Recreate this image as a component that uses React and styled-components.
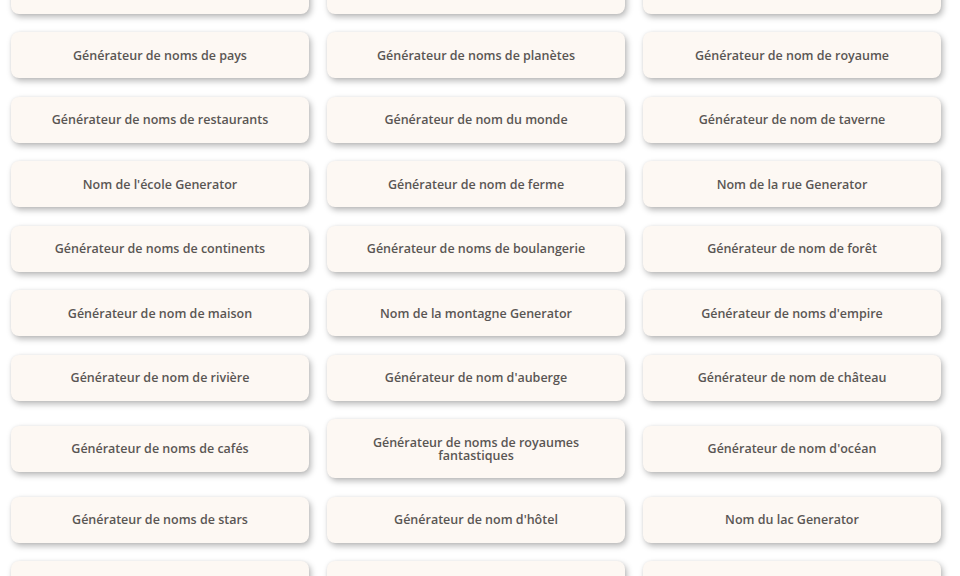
import styled, { createGlobalStyle } from "styled-components";

const GlobalStyle = createGlobalStyle`
  html, body {
    margin: 0;
    padding: 0;
    background: #ffffff;
    overflow: hidden;
  }
  body {
    font-family: "Open Sans", "Noto Sans", sans-serif;
  }
`;

const Page = styled.div`
  width: 960px;
  height: 576px;
  overflow: hidden;
`;

const Grid = styled.div`
  display: grid;
  grid-template-columns: repeat(3, 298px);
  column-gap: 18px;
  row-gap: 18.5px;
  align-items: center;
  margin-top: -32.5px;
  padding-left: 11px;
`;

const Card = styled.a`
  display: flex;
  align-items: center;
  justify-content: center;
  box-sizing: border-box;
  min-height: 46px;
  padding: 6px 20px;
  background: #fdf8f3;
  border-radius: 8px;
  box-shadow: 2px 3px 6px rgba(0, 0, 0, 0.28), 0 0 3px rgba(0, 0, 0, 0.06);
  color: #5a5654;
  font-size: 12.5px;
  font-weight: 600;
  line-height: 13px;
  text-align: center;
  text-decoration: none;
  ${({ $tall }) => $tall && "min-height: 59px; padding: 6px 40px;"}
`;

const names = [
  "",
  "",
  "",
  "Générateur de noms de pays",
  "Générateur de noms de planètes",
  "Générateur de nom de royaume",
  "Générateur de noms de restaurants",
  "Générateur de nom du monde",
  "Générateur de nom de taverne",
  "Nom de l'école Generator",
  "Générateur de nom de ferme",
  "Nom de la rue Generator",
  "Générateur de noms de continents",
  "Générateur de noms de boulangerie",
  "Générateur de nom de forêt",
  "Générateur de nom de maison",
  "Nom de la montagne Generator",
  "Générateur de noms d'empire",
  "Générateur de nom de rivière",
  "Générateur de nom d'auberge",
  "Générateur de nom de château",
  "Générateur de noms de cafés",
  "Générateur de noms de royaumes fantastiques",
  "Générateur de nom d'océan",
  "Générateur de noms de stars",
  "Générateur de nom d'hôtel",
  "Nom du lac Generator",
  "",
  "",
  "",
];

export default function App() {
  return (
    <Page>
      <GlobalStyle />
      <Grid>
        {names.map((n, i) => (
          <Card key={i} $tall={n.length > 40}>
            {n}
          </Card>
        ))}
      </Grid>
    </Page>
  );
}
